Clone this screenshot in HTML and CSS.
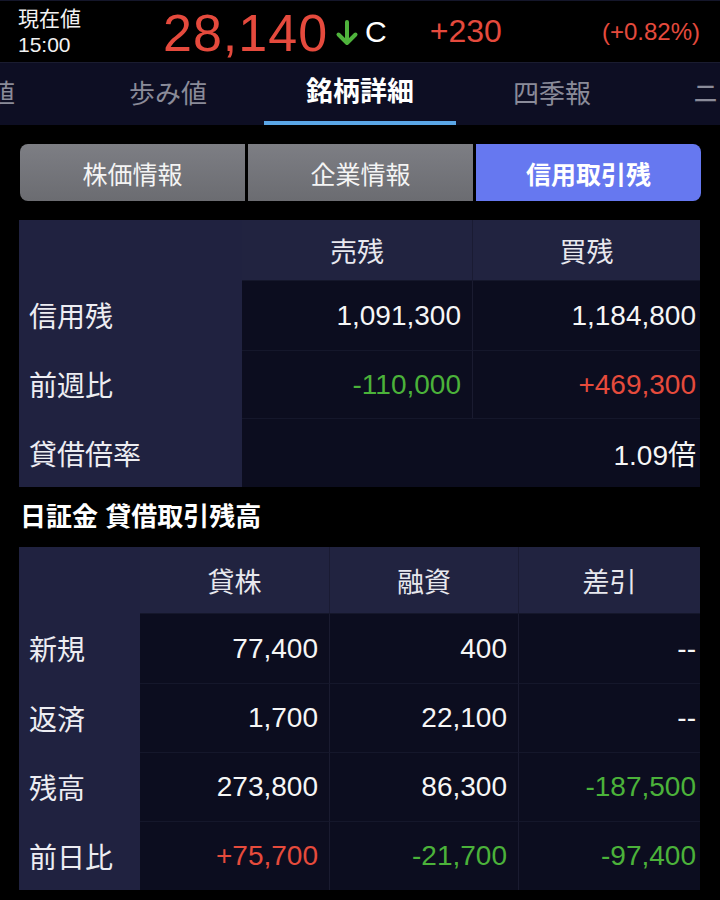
FILE: index.html
```html
<!DOCTYPE html>
<html lang="ja">
<head>
<meta charset="utf-8">
<link rel="stylesheet" href="styles.css">
</head>
<body>
<div class="page">
  <header class="quote">
    <div class="qlabel"><div>現在値</div><div>15:00</div></div>
    <div class="price">28,140</div>
    <svg class="arrow" width="24" height="28" viewBox="0 0 24 28"><path d="M12 3V24M3.5 15.5L12 24L20.5 15.5" fill="none" stroke="#4fb33c" stroke-width="4" stroke-linecap="round" stroke-linejoin="round"/></svg>
    <div class="cflag">C</div>
    <div class="chg">+230</div>
    <div class="pct">(+0.82%)</div>
  </header>
  <nav class="tabs">
    <div class="tab">気配値</div>
    <div class="tab">歩み値</div>
    <div class="tab active">銘柄詳細</div>
    <div class="tab">四季報</div>
    <div class="tab">ニュース</div>
  </nav>
  <div class="seg">
    <div class="segbtn">株価情報</div>
    <div class="segbtn">企業情報</div>
    <div class="segbtn sel">信用取引残</div>
  </div>

  <div class="grid g1">
    <div class="hd lab"></div><div class="hd">売残</div><div class="hd last">買残</div>
    <div class="lab">信用残</div><div class="num">1,091,300</div><div class="num last">1,184,800</div>
    <div class="lab">前週比</div><div class="num dn">-110,000</div><div class="num up last">+469,300</div>
    <div class="lab">貸借倍率</div><div class="num span last">1.09倍</div>
  </div>

  <h2 class="sect">日証金 貸借取引残高</h2>

  <div class="grid g2">
    <div class="hd lab"></div><div class="hd">貸株</div><div class="hd">融資</div><div class="hd last">差引</div>
    <div class="lab">新規</div><div class="num">77,400</div><div class="num">400</div><div class="num last">--</div>
    <div class="lab">返済</div><div class="num">1,700</div><div class="num">22,100</div><div class="num last">--</div>
    <div class="lab">残高</div><div class="num">273,800</div><div class="num">86,300</div><div class="num dn last">-187,500</div>
    <div class="lab">前日比</div><div class="num up">+75,700</div><div class="num dn">-21,700</div><div class="num dn last">-97,400</div>
  </div>
</div>
</body>
</html>
```
FILE: styles.css
```css
html, body {
  margin: 0;
  padding: 0;
  background: #000;
}
body {
  font-family: "Liberation Sans", "Noto Sans CJK JP", sans-serif;
  color: #fff;
}
.page {
  width: 720px;
  height: 900px;
  overflow: hidden;
  background: #000;
}
.quote {
  height: 61px;
  border-top: 1px solid #14162a;
  display: flex;
  align-items: center;
  position: relative;
}
.qlabel {
  margin-left: 18px;
  width: 145px;
  font-size: 21px;
  line-height: 26px;
  color: #f2f2f2;
}
.price {
  font-size: 52px;
  color: #e54a3d;
  letter-spacing: 1px;
  line-height: 1;
  margin-top: 2px;
}
.arrow {
  margin-left: 7px;
  margin-top: 2px;
}
.cflag {
  margin-left: 6px;
  font-size: 30px;
  color: #fff;
}
.chg {
  margin-left: 43px;
  font-size: 32px;
  color: #e54a3d;
}
.pct {
  margin-left: auto;
  margin-right: 20px;
  font-size: 24px;
  color: #e54a3d;
}
.tabs {
  height: 62px;
  background: #0d0e23;
  border-top: 1px solid #1a1c30;
  display: flex;
  overflow: hidden;
  position: relative;
}
.tab {
  flex: 0 0 192px;
  text-align: center;
  font-size: 26px;
  color: #8a8b99;
  line-height: 62px;
  box-sizing: border-box;
  white-space: nowrap;
}
.tab:first-child {
  margin-left: -120px;
}
.tab.active {
  color: #fff;
  font-weight: bold;
  border-bottom: 4px solid #5aa6e6;
  line-height: 58px;
  font-size: 27px;
}
.seg {
  margin: 19px 19px 0 20px;
  height: 57px;
  display: flex;
  gap: 3px;
}
.segbtn {
  flex: 1;
  display: flex;
  align-items: center;
  justify-content: center;
  font-size: 25px;
  color: #f4f4f4;
  background: linear-gradient(#7d7e84, #6b6c71);
}
.segbtn:first-child {
  border-radius: 8px 0 0 8px;
}
.segbtn.sel {
  border-radius: 0 8px 8px 0;
  background: #6678f0;
  font-weight: bold;
  color: #fff;
}
.grid {
  display: grid;
  margin: 19px 20px 0 19px;
}
.g1 {
  grid-template-columns: 223px 231px 227px;
  grid-template-rows: 60px 70px 68px 69px;
}
.g2 {
  grid-template-columns: 121px 190px 189px 181px;
  grid-template-rows: 66px 70px 69px 69px 69px;
  margin-top: 0;
}
.grid > div {
  display: flex;
  align-items: center;
  font-size: 28px;
  box-sizing: border-box;
}
.hd {
  background: #212340;
  justify-content: center;
  color: #e8e8ee;
  font-size: 27px !important;
  border-right: 1px solid #1a1b33;
}
.hd.last, .num.last {
  border-right: none;
}
.lab {
  background: #202240;
  padding-left: 10px;
  color: #ededf2;
}
.hd.lab {
  border-right: none;
}
.num {
  background: #0c0d1f;
  justify-content: flex-end;
  padding-right: 11px;
  color: #f6f6f6;
  border-right: 1px solid #1a1b30;
  border-top: 1px solid #15172b;
}
.num.last {
  padding-right: 4px;
}
.num.span {
  grid-column: 2 / 4;
}
.up { color: #e64b3c !important; }
.dn { color: #4bb23a !important; }
.sect {
  margin: 0;
  height: 60px;
  padding-left: 20px;
  padding-top: 16px;
  box-sizing: border-box;
  font-size: 26px;
  font-weight: bold;
  line-height: 28px;
  color: #fff;
}
```
